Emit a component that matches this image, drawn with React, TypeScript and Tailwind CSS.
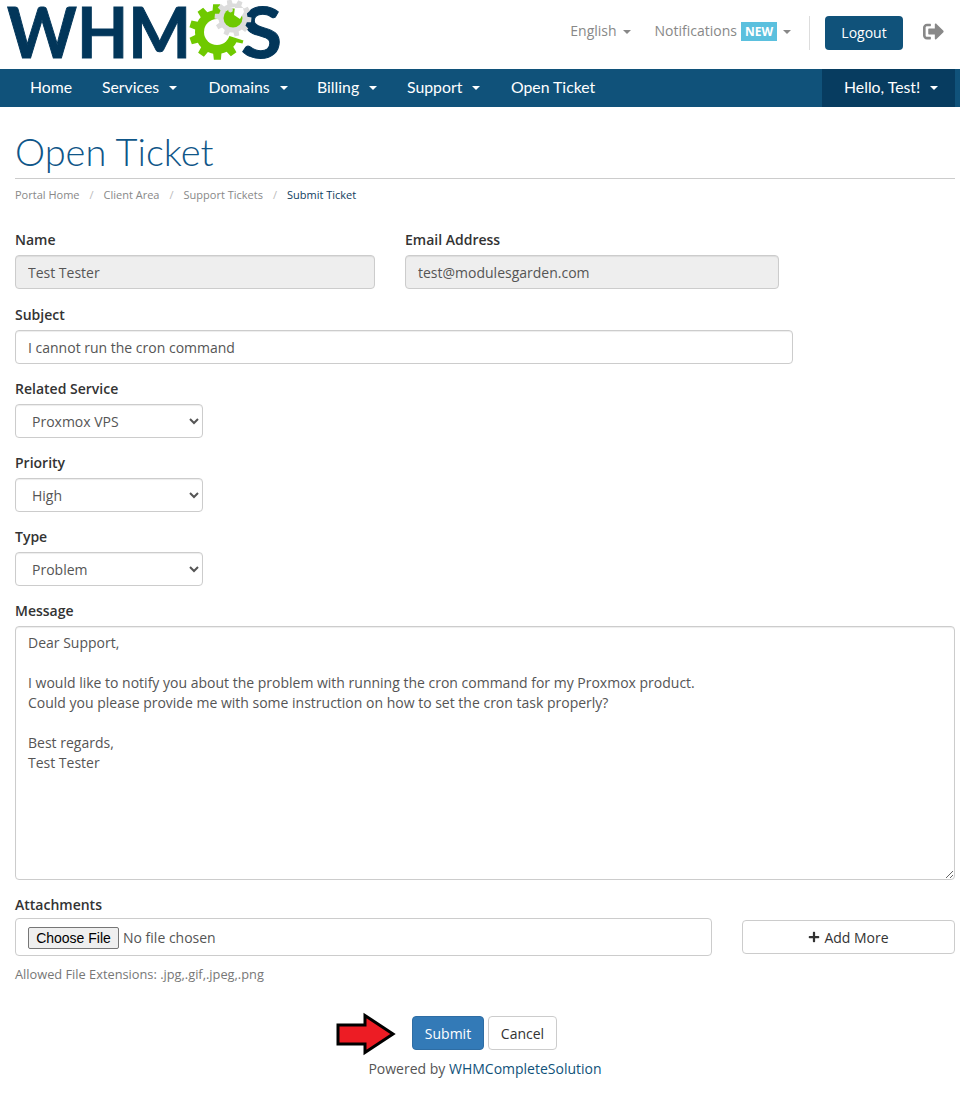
import React from "react";
import { FaSignOutAlt, FaPlus } from "react-icons/fa";

function gear(cx: number, cy: number, R: number, r: number, teeth: number, rot = 0) {
  const pts: string[] = [];
  const step = (Math.PI * 2) / teeth;
  for (let i = 0; i < teeth; i++) {
    const a = rot + i * step;
    const p = (rad: number, t: number) =>
      `${(cx + rad * Math.cos(a + t * step)).toFixed(2)},${(cy + rad * Math.sin(a + t * step)).toFixed(2)}`;
    pts.push(p(r, -0.5), p(r, -0.3), p(R, -0.2), p(R, 0.2), p(r, 0.3));
  }
  return "M" + pts.join("L") + "Z";
}

function Logo() {
  return (
    <svg width="290" height="69" viewBox="0 0 290 69" className="block shrink-0 overflow-visible">
      <text x="7" y="58" fontFamily="Lato" fontWeight="700" fontSize="71" fill="#02365a" stroke="#02365a" strokeWidth="1" textLength="184" lengthAdjust="spacingAndGlyphs">WHM</text>
      <path d={gear(217, 32, 28, 22, 10, 0.3)} fill="#6fc900" />
      <circle cx="217" cy="32" r="13" fill="#fff" />
      <path d="M217 32 L235 -5 L270 -5 L270 49 Z" fill="#fff" />
      <text x="241" y="58" fontFamily="Lato" fontWeight="700" fontSize="71" fill="#02365a" stroke="#02365a" strokeWidth="1" textLength="41" lengthAdjust="spacingAndGlyphs">S</text>
      <path d={gear(233, 18, 18.5, 14.5, 10, 0.1)} fill="#dcdcdc" />
      <circle cx="233" cy="18" r="9.5" fill="#6fc900" />
      <path d="M229 8 L235 7 L234 15 L240 19 L244 12 L243 8 Z" fill="#fff" />
      <circle cx="230.5" cy="10" r="2.4" fill="#dcdcdc" />
    </svg>
  );
}

const Caret = ({ className }: { className: string }) => (
  <span className={`inline-block w-0 h-0 border-x-4 border-x-transparent border-t-4 ${className}`} />
);

function NavItem({ label, caret, w }: { label: string; caret?: boolean; w: string }) {
  return (
    <a className={`flex items-center h-full text-white ${w}`}>
      <span className="font-['Lato',sans-serif] text-[15.8px] pb-[2px]">{label}</span>
      {caret && <Caret className="border-t-white ml-[10px]" />}
    </a>
  );
}

const inputCls =
  "block h-[34px] border border-[#ccc] rounded-[4px] px-3 text-[14px] text-[#555] font-['Open_Sans',sans-serif] shadow-[inset_0_1px_1px_rgba(0,0,0,0.075)]";

function Label({ children }: { children: React.ReactNode }) {
  return <label className="block h-5 mb-[5px] text-[14px] leading-5 font-semibold text-[#333]">{children}</label>;
}

function SelectField({ label, value }: { label: string; value: string }) {
  return (
    <div className="mb-[15px]">
      <Label>{label}</Label>
      <select defaultValue={value} className={`${inputCls} w-[188px] bg-white`}>
        <option>{value}</option>
      </select>
    </div>
  );
}

const message = `Dear Support,

I would like to notify you about the problem with running the cron command for my Proxmox product.
Could you please provide me with some instruction on how to set the cron task properly?

Best regards,
Test Tester`;

export default function App() {
  return (
    <div className="w-[960px] h-[1095px] bg-white overflow-hidden font-['Open_Sans',sans-serif] text-[14px] text-[#333]">
      <header className="h-[69px] flex items-start">
        <Logo />
        <div className="flex items-center ml-auto mt-4 h-[34px] text-[#888]">
          <span className="mt-[-6px]">English</span>
          <Caret className="border-t-[#888] ml-[6px] mt-[-2px]" />
          <span className="ml-6 mt-[-6px]">Notifications</span>
          <span className="ml-1 mt-[-3px] w-9 h-[19px] bg-[#5bc0de] text-white text-[12px] font-bold leading-[19px] text-center">NEW</span>
          <Caret className="border-t-[#888] ml-[6px] mt-[-2px]" />
          <span className="w-px h-[34px] bg-[#ddd] ml-[18px]" />
          <button className="ml-[15px] w-[78px] h-[34px] pb-[2px] rounded-[4px] bg-[#10527a] text-white text-[14px]">Logout</button>
          <FaSignOutAlt className="ml-5 mr-4 text-[#888] text-[21px] mt-[-4px]" />
        </div>
      </header>

      <nav className="h-[38px] bg-[#10527a] flex items-center">
        <NavItem label="Home" w="ml-[30px] w-[72px]" />
        <NavItem label="Services" caret w="w-[106.5px]" />
        <NavItem label="Domains" caret w="w-[108.5px]" />
        <NavItem label="Billing" caret w="w-[90px]" />
        <NavItem label="Support" caret w="w-[104px]" />
        <NavItem label="Open Ticket" w="w-[311px]" />
        <div className="w-[133px] h-full bg-[#073c60] pl-[22px] flex items-center text-white">
          <span className="font-['Lato',sans-serif] text-[15.8px] pb-[2px]">Hello, Test!</span>
          <Caret className="border-t-white ml-[10px]" />
        </div>
      </nav>

      <main className="pl-[15px] pr-[5px]">
        <h1 className="mt-[21px] h-[51px] border-b border-[#ccc] font-['Lato',sans-serif] font-light text-[38px] leading-[46px] text-[#0f5688]">Open Ticket</h1>
        <div className="mt-[6px] h-5 flex items-center text-[11px] text-[#888]">
          <span>Portal Home</span>
          <span className="mx-[10px] text-[#bbb]">/</span>
          <span>Client Area</span>
          <span className="mx-[10px] text-[#bbb]">/</span>
          <span>Support Tickets</span>
          <span className="mx-[10px] text-[#bbb]">/</span>
          <span className="text-[#0f3d5e]">Submit Ticket</span>
        </div>

        <form className="mt-[25px]">
          <div className="flex gap-[30px] mb-4">
            <div>
              <Label>Name</Label>
              <input readOnly value="Test Tester" className={`${inputCls} w-[360px] bg-[#eee]`} />
            </div>
            <div>
              <Label>Email Address</Label>
              <input readOnly value="test@modulesgarden.com" className={`${inputCls} w-[374px] bg-[#eee]`} />
            </div>
          </div>
          <div className="mb-[15px]">
            <Label>Subject</Label>
            <input readOnly value="I cannot run the cron command" className={`${inputCls} w-[778px] bg-white`} />
          </div>
          <SelectField label="Related Service" value="Proxmox VPS" />
          <SelectField label="Priority" value="High" />
          <SelectField label="Type" value="Problem" />
          <div className="mb-[15px]">
            <Label>Message</Label>
            <textarea
              readOnly
              defaultValue={message}
              className="block w-[940px] h-[254px] border border-[#ccc] rounded-[4px] px-3 py-[6px] text-[14px] leading-5 text-[#555] shadow-[inset_0_1px_1px_rgba(0,0,0,0.075)]"
            />
          </div>
          <label className="block h-5 mb-[3px] leading-5 font-semibold">Attachments</label>
          <div className="flex items-center gap-[30px] h-[38px]">
            <input
              type="file"
              className="block w-[697px] h-[38px] border border-[#ccc] rounded-[4px] pl-3 py-[8px] text-[14px] text-[#555] file:font-['Liberation_Sans',sans-serif] file:text-[14px] file:text-black file:bg-[#efefef] file:border file:border-solid file:border-[#767676] file:rounded-[2px] file:w-[91px] file:h-[22px] file:mr-1"
            />
            <button type="button" className="flex items-center justify-center gap-1 w-[213px] h-[34px] border border-[#ccc] rounded-[4px] bg-white text-[#333]">
              <FaPlus className="text-[12px]" />
              Add More
            </button>
          </div>
          <p className="mt-2 h-5 leading-5 text-[12.8px] text-[#777]">Allowed File Extensions: .jpg,.gif,.jpeg,.png</p>

          <div className="relative mt-[32px] flex justify-center gap-1 pr-px">
            <svg width="66" height="46" viewBox="0 0 66 46" className="absolute left-[320px] top-[-4px]">
              <path d="M3 13 H30 V3.5 L58 22 L30 40.5 V32 H3 Z" fill="#ed1c24" stroke="#000" strokeWidth="3" />
            </svg>
            <button type="button" className="w-[72px] h-[34px] rounded-[4px] border border-[#2e6da4] bg-[#337ab7] text-white">Submit</button>
            <button type="button" className="w-[69px] h-[34px] rounded-[4px] border border-[#ccc] bg-white text-[#333]">Cancel</button>
          </div>
        </form>
        <p className="mt-[9px] text-center leading-5 text-[#555]">
          Powered by <span className="text-[#10527a]">WHMCompleteSolution</span>
        </p>
      </main>
    </div>
  );
}
